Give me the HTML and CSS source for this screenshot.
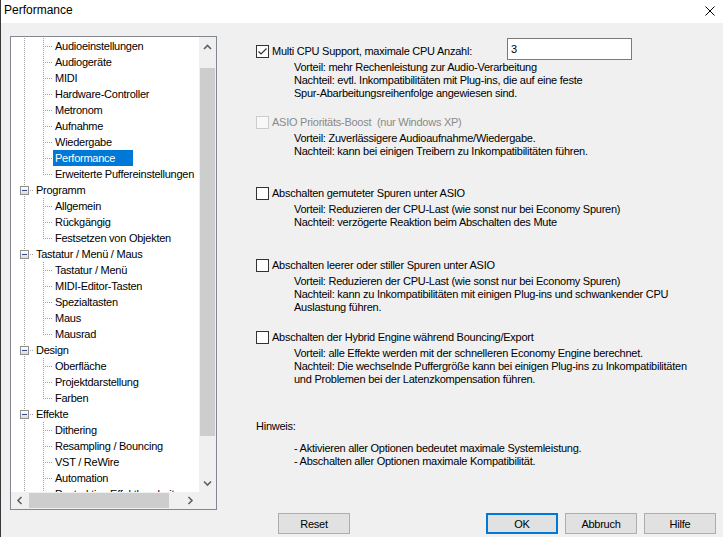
FILE: index.html
```html
<!DOCTYPE html>
<html lang="de">
<head>
    <meta charset="UTF-8">
    <title>Performance</title>
    <link rel="stylesheet" href="styles.css">
</head>
<body>
    <div class="titlebar">
        <span class="title">Performance</span>
        <svg class="close" width="10" height="10" viewBox="0 0 10 10">
            <path d="M0.5 0.5 L9.5 9.5 M9.5 0.5 L0.5 9.5" stroke="#000" stroke-width="1" fill="none"/>
        </svg>
    </div>

    <div class="content">
        <div class="tree-box">
            <div class="tree-view">
                <div class="node"><i class="g v"></i><i class="g t"></i><span class="label">Audioeinstellungen</span></div>
                <div class="node"><i class="g v"></i><i class="g t"></i><span class="label">Audiogeräte</span></div>
                <div class="node"><i class="g v"></i><i class="g t"></i><span class="label">MIDI</span></div>
                <div class="node"><i class="g v"></i><i class="g t"></i><span class="label">Hardware-Controller</span></div>
                <div class="node"><i class="g v"></i><i class="g t"></i><span class="label">Metronom</span></div>
                <div class="node"><i class="g v"></i><i class="g t"></i><span class="label">Aufnahme</span></div>
                <div class="node"><i class="g v"></i><i class="g t"></i><span class="label">Wiedergabe</span></div>
                <div class="node"><i class="g v"></i><i class="g t"></i><span class="label selected">Performance</span></div>
                <div class="node"><i class="g v"></i><i class="g l"></i><span class="label">Erweiterte Puffereinstellungen</span></div>

                <div class="node"><i class="g x"><b class="box"></b></i><span class="label">Programm</span></div>
                <div class="node"><i class="g v"></i><i class="g t"></i><span class="label">Allgemein</span></div>
                <div class="node"><i class="g v"></i><i class="g t"></i><span class="label">Rückgängig</span></div>
                <div class="node"><i class="g v"></i><i class="g l"></i><span class="label">Festsetzen von Objekten</span></div>

                <div class="node"><i class="g x"><b class="box"></b></i><span class="label">Tastatur / Menü / Maus</span></div>
                <div class="node"><i class="g v"></i><i class="g t"></i><span class="label">Tastatur / Menü</span></div>
                <div class="node"><i class="g v"></i><i class="g t"></i><span class="label">MIDI-Editor-Tasten</span></div>
                <div class="node"><i class="g v"></i><i class="g t"></i><span class="label">Spezialtasten</span></div>
                <div class="node"><i class="g v"></i><i class="g t"></i><span class="label">Maus</span></div>
                <div class="node"><i class="g v"></i><i class="g l"></i><span class="label">Mausrad</span></div>

                <div class="node"><i class="g x"><b class="box"></b></i><span class="label">Design</span></div>
                <div class="node"><i class="g v"></i><i class="g t"></i><span class="label">Oberfläche</span></div>
                <div class="node"><i class="g v"></i><i class="g t"></i><span class="label">Projektdarstellung</span></div>
                <div class="node"><i class="g v"></i><i class="g l"></i><span class="label">Farben</span></div>

                <div class="node"><i class="g x"><b class="box"></b></i><span class="label">Effekte</span></div>
                <div class="node"><i class="g v"></i><i class="g t"></i><span class="label">Dithering</span></div>
                <div class="node"><i class="g v"></i><i class="g t"></i><span class="label">Resampling / Bouncing</span></div>
                <div class="node"><i class="g v"></i><i class="g t"></i><span class="label">VST / ReWire</span></div>
                <div class="node"><i class="g v"></i><i class="g t"></i><span class="label">Automation</span></div>
                <div class="node"><i class="g v"></i><i class="g t"></i><span class="label">Destruktive Effektbearbeitung</span></div>
            </div>

            <div class="vscroll">
                <div class="sb-btn">
                    <svg width="17" height="17" viewBox="0 0 17 17"><path d="M5 11 L8.5 7.5 L12 11" stroke="#606060" stroke-width="1.6" fill="none"/></svg>
                </div>
                <div class="sb-track"><div class="sb-thumb"></div></div>
                <div class="sb-btn">
                    <svg width="17" height="17" viewBox="0 0 17 17"><path d="M5 6.5 L8.5 10 L12 6.5" stroke="#606060" stroke-width="1.6" fill="none"/></svg>
                </div>
            </div>

            <div class="hscroll">
                <div class="sb-btn">
                    <svg width="17" height="17" viewBox="0 0 17 17"><path d="M10.5 5 L7 8.5 L10.5 12" stroke="#606060" stroke-width="1.6" fill="none"/></svg>
                </div>
                <div class="sb-track"><div class="sb-thumb"></div></div>
                <div class="sb-btn">
                    <svg width="17" height="17" viewBox="0 0 17 17"><path d="M6.5 5 L10 8.5 L6.5 12" stroke="#606060" stroke-width="1.6" fill="none"/></svg>
                </div>
            </div>

            <div class="corner"></div>
        </div>

        <div class="panel">
            <div class="opt opt-cpu">
                <div class="opt-head">
                    <label class="opt-label">
                        <span class="check">
                            <svg width="11" height="11" viewBox="0 0 11 11"><path d="M1.5 5.5 L4 8 L9.5 2.5" stroke="#333" stroke-width="1.2" fill="none"/></svg>
                        </span>
                        Multi CPU Support, maximale CPU Anzahl:
                    </label>
                    <input class="cpu-count" type="text" value="3">
                </div>
                <p class="desc">Vorteil: mehr Rechenleistung zur Audio-Verarbeitung<br>Nachteil: evtl. Inkompatibilitäten mit Plug-ins, die auf eine feste<br>Spur-Abarbeitungsreihenfolge angewiesen sind.</p>
            </div>

            <div class="opt opt-asio">
                <div class="opt-head disabled">
                    <label class="opt-label"><span class="check"></span>ASIO Prioritäts-Boost &nbsp;(nur Windows XP)</label>
                </div>
                <p class="desc">Vorteil: Zuverlässigere Audioaufnahme/Wiedergabe.<br>Nachteil: kann bei einigen Treibern zu Inkompatibilitäten führen.</p>
            </div>

            <div class="opt opt-mute">
                <div class="opt-head">
                    <label class="opt-label"><span class="check"></span>Abschalten gemuteter Spuren unter ASIO</label>
                </div>
                <p class="desc">Vorteil: Reduzieren der CPU-Last (wie sonst nur bei Economy Spuren)<br>Nachteil: verzögerte Reaktion beim Abschalten des Mute</p>
            </div>

            <div class="opt opt-silent">
                <div class="opt-head">
                    <label class="opt-label"><span class="check"></span>Abschalten leerer oder stiller Spuren unter ASIO</label>
                </div>
                <p class="desc">Vorteil: Reduzieren der CPU-Last (wie sonst nur bei Economy Spuren)<br>Nachteil: kann zu Inkompatibilitäten mit einigen Plug-ins und schwankender CPU<br>Auslastung führen.</p>
            </div>

            <div class="opt opt-hybrid">
                <div class="opt-head">
                    <label class="opt-label"><span class="check"></span>Abschalten der Hybrid Engine während Bouncing/Export</label>
                </div>
                <p class="desc">Vorteil: alle Effekte werden mit der schnelleren Economy Engine berechnet.<br>Nachteil: Die wechselnde Puffergröße kann bei einigen Plug-ins zu Inkompatibilitäten<br>und Problemen bei der Latenzkompensation führen.</p>
            </div>

            <p class="hint-title">Hinweis:</p>
            <p class="desc hint">- Aktivieren aller Optionen bedeutet maximale Systemleistung.<br>- Abschalten aller Optionen maximale Kompatibilität.</p>

            <div class="buttons">
                <button type="button" class="btn">Reset</button>
                <div class="btn-group">
                    <button type="button" class="btn default">OK</button>
                    <button type="button" class="btn">Abbruch</button>
                    <button type="button" class="btn">Hilfe</button>
                </div>
            </div>
        </div>
    </div>
</body>
</html>
```

FILE: styles.css
```css
body {
    margin: 0;
    width: 722px;
    height: 537px;
    overflow: hidden;
    background-color: #f0f0f0;
    border-left: 1px solid #3a3a3a;
    font-family: "Liberation Sans", Arial, sans-serif;
    font-size: 11px;
    letter-spacing: -0.25px;
    color: #000;
}
.titlebar {
    display: flex;
    align-items: flex-start;
    height: 23px;
    background-color: #fff;
}
.title {
    padding-left: 3px;
    font-size: 12px;
    letter-spacing: 0;
    line-height: 20px;
}
.close {
    margin: 6px 8px 0 auto;
}
.content {
    display: grid;
    grid-template-columns: 207px 1fr;
    column-gap: 39px;
    align-items: start;
    padding: 13px 0 0 9px;
}

/* tree */
.tree-box {
    display: grid;
    grid-template-columns: 1fr 17px;
    grid-template-rows: 1fr 17px;
    height: 474px;
    box-sizing: border-box;
    border: 1px solid #828790;
    background-color: #fff;
}
.tree-view {
    overflow: hidden;
    padding: 1px 0 0 4px;
    white-space: nowrap;
}
.node {
    display: flex;
    height: 16px;
}
.g {
    position: relative;
    flex: none;
    width: 19px;
    height: 16px;
}
.g::before {
    content: "";
    position: absolute;
    left: 9px;
    top: 0;
    width: 1px;
    height: 16px;
    background: repeating-linear-gradient(to bottom, #a0a0a0 0 1px, transparent 1px 2px);
}
.g.l::before {
    height: 9px;
}
.g.t::after,
.g.l::after,
.g.x::after {
    content: "";
    position: absolute;
    left: 11px;
    right: 0;
    top: 8px;
    height: 1px;
    background: repeating-linear-gradient(to right, #a0a0a0 0 1px, transparent 1px 2px);
}
.g.x::after {
    left: 15px;
}
.box {
    position: absolute;
    left: 5px;
    top: 4px;
    width: 9px;
    height: 9px;
    box-sizing: border-box;
    border: 1px solid #8f8f8f;
    background: linear-gradient(#fff, #dcdcdc);
    z-index: 1;
}
.box::after {
    content: "";
    position: absolute;
    left: 1px;
    top: 3px;
    width: 5px;
    height: 1px;
    background-color: #2c4c8c;
}
.label {
    padding: 0 2px;
    line-height: 16px;
}
.label.selected {
    padding-right: 18px;
    background-color: #0078d7;
    color: #fff;
}

/* scrollbars */
.vscroll {
    display: flex;
    flex-direction: column;
    background-color: #f0f0f0;
}
.hscroll {
    display: flex;
    background-color: #f0f0f0;
}
.sb-btn {
    flex: none;
    width: 17px;
    height: 17px;
}
.sb-btn svg {
    display: block;
}
.vscroll .sb-btn:first-child svg {
    margin-top: 1px;
}
.sb-track {
    flex: 1;
}
.sb-thumb {
    background-color: #cdcdcd;
}
.vscroll .sb-thumb {
    margin: 14px 1px 0 1px;
    height: 368px;
}
.hscroll .sb-thumb {
    margin: 1px 0 1px 1px;
    width: 140px;
    height: 15px;
}
.corner {
    background-color: #f0f0f0;
}

/* options panel */
.panel {
    display: flex;
    flex-direction: column;
    padding: 8px 7px 0 0;
}
.opt-head {
    display: flex;
    align-items: center;
    height: 14px;
}
.opt-label {
    display: flex;
    align-items: center;
    width: 251px;
    line-height: 14px;
    white-space: nowrap;
}
.check {
    flex: none;
    display: flex;
    align-items: center;
    justify-content: center;
    width: 13px;
    height: 13px;
    box-sizing: border-box;
    margin-right: 3px;
    border: 1px solid #333;
    background-color: #fff;
}
.disabled .opt-label {
    color: #8a8a8a;
}
.disabled .check {
    border-color: #cccccc;
    background-color: #f8f8f8;
}
.cpu-count {
    align-self: flex-start;
    width: 125px;
    height: 22px;
    margin: -6px 0 0 0;
    padding: 0 3px;
    box-sizing: border-box;
    border: 1px solid #7a7a7a;
    background-color: #fff;
    font: inherit;
    letter-spacing: inherit;
    color: #000;
}
.desc {
    margin: 3px 0 0 38px;
    line-height: 13px;
    white-space: nowrap;
}
.opt-asio {
    margin-top: 15px;
}
.opt-mute {
    margin-top: 28px;
}
.opt-silent {
    margin-top: 29px;
}
.opt-hybrid {
    margin-top: 16px;
}
.hint-title {
    margin: 34px 0 0 0;
    line-height: 13px;
}
.desc.hint {
    margin-top: 9px;
}
.buttons {
    display: flex;
    margin-top: 45px;
}
.btn {
    width: 72px;
    height: 21px;
    padding: 0;
    border: 1px solid #adadad;
    background-color: #e1e1e1;
    font: inherit;
    letter-spacing: inherit;
    color: #000;
}
.buttons > .btn {
    margin-left: 22px;
}
.btn-group {
    display: flex;
    gap: 7px;
    margin-left: auto;
}
.btn.default {
    border: 2px solid #0078d7;
}
```
